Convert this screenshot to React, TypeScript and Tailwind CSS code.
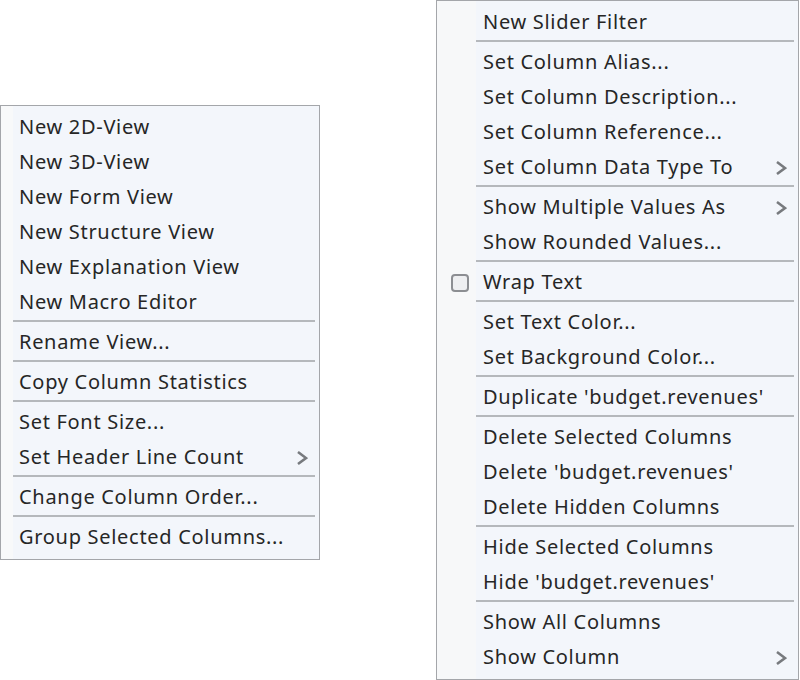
import React from 'react';

type Entry =
  | { kind: 'item'; label: string; sub?: boolean; check?: boolean }
  | { kind: 'sep' };

const item = (label: string, extra: { sub?: boolean; check?: boolean } = {}): Entry => ({
  kind: 'item',
  label,
  ...extra,
});
const sep: Entry = { kind: 'sep' };

const LEFT: Entry[] = [
  item('New 2D-View'),
  item('New 3D-View'),
  item('New Form View'),
  item('New Structure View'),
  item('New Explanation View'),
  item('New Macro Editor'),
  sep,
  item('Rename View...'),
  sep,
  item('Copy Column Statistics'),
  sep,
  item('Set Font Size...'),
  item('Set Header Line Count', { sub: true }),
  sep,
  item('Change Column Order...'),
  sep,
  item('Group Selected Columns...'),
];

const RIGHT: Entry[] = [
  item('New Slider Filter'),
  sep,
  item('Set Column Alias...'),
  item('Set Column Description...'),
  item('Set Column Reference...'),
  item('Set Column Data Type To', { sub: true }),
  sep,
  item('Show Multiple Values As', { sub: true }),
  item('Show Rounded Values...'),
  sep,
  item('Wrap Text', { check: true }),
  sep,
  item('Set Text Color...'),
  item('Set Background Color...'),
  sep,
  item("Duplicate 'budget.revenues'"),
  sep,
  item('Delete Selected Columns'),
  item("Delete 'budget.revenues'"),
  item('Delete Hidden Columns'),
  sep,
  item('Hide Selected Columns'),
  item("Hide 'budget.revenues'"),
  sep,
  item('Show All Columns'),
  item('Show Column', { sub: true }),
];

function Chevron() {
  return (
    <svg width="12" height="16" viewBox="0 0 12 16" aria-hidden="true">
      <polyline
        points="2,2 10,8 2,14"
        fill="none"
        stroke="#777a7e"
        strokeWidth="2.6"
        strokeLinejoin="miter"
      />
    </svg>
  );
}

function Menu({ entries, strip, textPad }: { entries: Entry[]; strip: 'narrow' | 'wide'; textPad: string }) {
  const stripW = strip === 'wide' ? 'w-[39px]' : 'w-[12px]';
  const sepMl = strip === 'wide' ? 'ml-[39px]' : 'ml-[12px]';
  const bg =
    strip === 'wide'
      ? 'bg-[linear-gradient(to_right,#f7f8f9_39px,#f3f6fb_39px)]'
      : 'bg-[linear-gradient(to_right,#f8f9fa_12px,#f3f6fb_12px)]';

  return (
    <div className={`flex flex-col border border-[#a4a6aa] py-[4px] ${bg}`}>
      {entries.map((e, i) =>
        e.kind === 'sep' ? (
          <div key={i} className={`h-[5px] ${sepMl} mr-[4px]`}>
            <div className="h-[2px] bg-[#b5b8bc]" />
          </div>
        ) : (
          <div key={i} className="flex h-[35px] items-center">
            <div className={`flex h-full shrink-0 items-center justify-end ${stripW}`}>
              {e.check && (
                <span className="mr-[7px] block h-[18px] w-[18px] rounded-[4px] border-2 border-[#8c8e92] bg-[#eeeff1]" />
              )}
            </div>
            <span className={`flex-1 whitespace-nowrap pb-[2px] text-[#262626] ${textPad}`}>{e.label}</span>
            {e.sub && (
              <span className="mr-[11px] flex items-center">
                <Chevron />
              </span>
            )}
          </div>
        ),
      )}
    </div>
  );
}

export default function App() {
  return (
    <div
      className="flex h-[680px] w-[800px] items-start bg-white text-[20px] leading-none tracking-[0.7px]"
      style={{ fontFamily: '"Noto Sans", "Open Sans", sans-serif' }}
    >
      <div className="mt-[105px] w-[320px]">
        <Menu entries={LEFT} strip="narrow" textPad="pl-[6px]" />
      </div>
      <div className="ml-[116px] w-[363px]">
        <Menu entries={RIGHT} strip="wide" textPad="pl-[7px]" />
      </div>
    </div>
  );
}
